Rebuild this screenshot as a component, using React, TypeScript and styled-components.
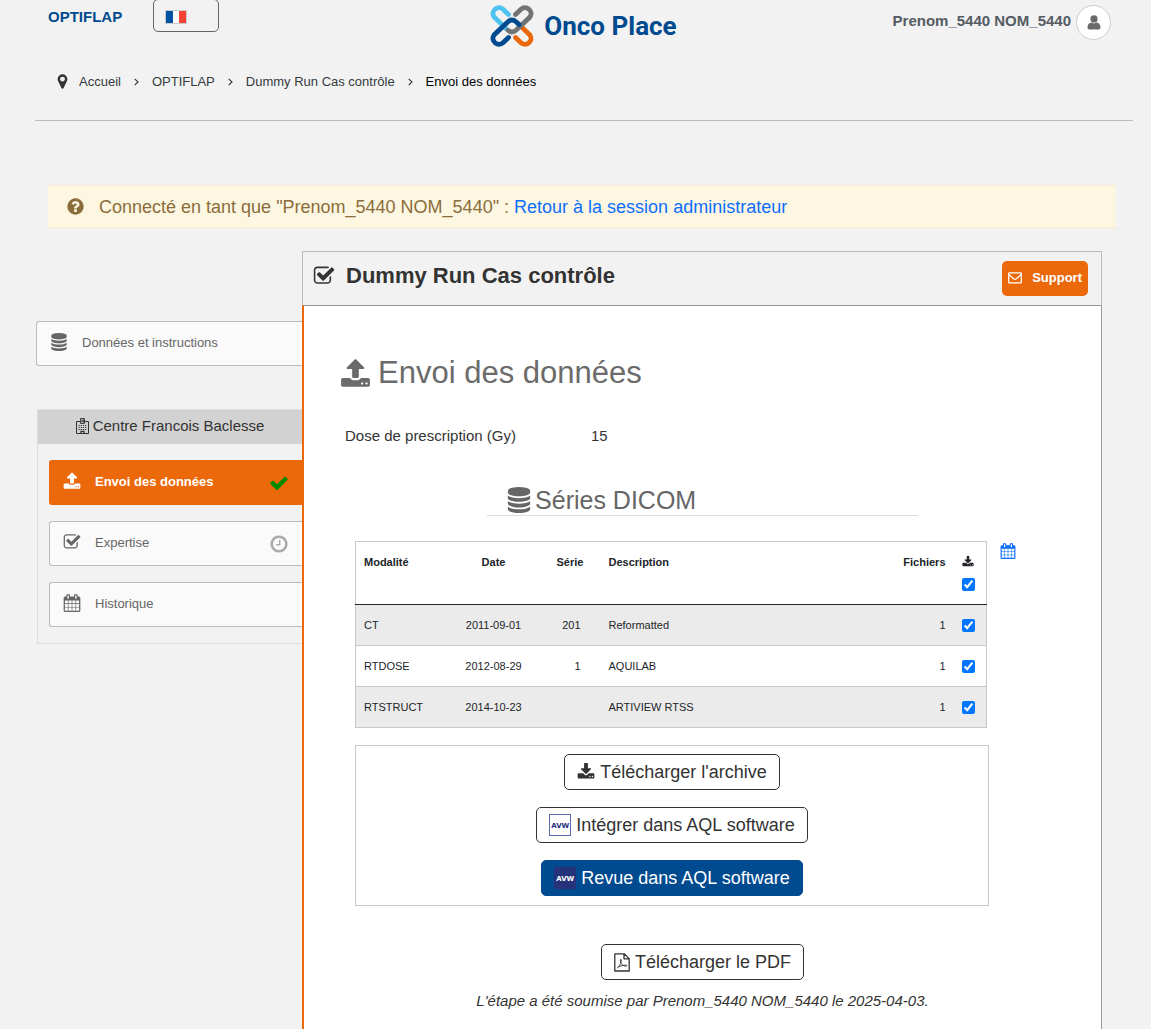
import React, { useState } from "react";
import styled, { createGlobalStyle, css } from "styled-components";

const GlobalStyle = createGlobalStyle`
  *, *::before, *::after { box-sizing: border-box; }
  body {
    margin: 0;
    background: #f2f2f2;
    color: #333;
    font-family: "Liberation Sans", Arial, sans-serif;
    font-size: 15px;
    line-height: 20px;
  }
  button { font-family: inherit; cursor: pointer; }
  a { text-decoration: none; }
`;

/* ---------- icons ---------- */

const GLYPHS = {
  database:
    "M896 768q237 0 443-43t325-127v170q0 69-103 128t-280 93.500-385 34.500-385-34.500-280-93.500-103-128v-170q119 84 325 127t443 43zm0 768q237 0 443-43t325-127v170q0 69-103 128t-280 93.500-385 34.500-385-34.500-280-93.500-103-128v-170q119 84 325 127t443 43zm0-384q237 0 443-43t325-127v170q0 69-103 128t-280 93.500-385 34.500-385-34.500-280-93.500-103-128v-170q119 84 325 127t443 43zm0-1152q208 0 385 34.500t280 93.500 103 128v128q0 69-103 128t-280 93.500-385 34.500-385-34.500-280-93.500-103-128v-128q0-69 103-128t280-93.500 385-34.500z",
  upload:
    "M1344 1472q0-26-19-45t-45-19-45 19-19 45 19 45 45 19 45-19 19-45zm256 0q0-26-19-45t-45-19-45 19-19 45 19 45 45 19 45-19 19-45zm128-224v320q0 40-28 68t-68 28h-1472q-40 0-68-28t-28-68v-320q0-40 28-68t68-28h427q21 56 70.500 92t110.500 36h256q61 0 110.500-36t70.500-92h427q40 0 68 28t28 68zm-325-648q-17 40-59 40h-256v448q0 26-19 45t-45 19h-256q-26 0-45-19t-19-45v-448h-256q-42 0-59-40-17-39 14-69l448-448q18-19 45-19t45 19l448 448q31 30 14 69z",
  download:
    "M1344 1344q0-26-19-45t-45-19-45 19-19 45 19 45 45 19 45-19 19-45zm256 0q0-26-19-45t-45-19-45 19-19 45 19 45 45 19 45-19 19-45zm128-224v320q0 40-28 68t-68 28h-1472q-40 0-68-28t-28-68v-320q0-40 28-68t68-28h465l135 136q58 56 136 56t136-56l136-136h464q40 0 68 28t28 68zm-325-569q17 41-14 70l-448 448q-18 19-45 19t-45-19l-448-448q-31-29-14-70 17-39 59-39h256v-448q0-26 19-45t45-19h256q26 0 45 19t19 45v448h256q42 0 59 39z",
  checkSquare:
    "M1472 930v318q0 119-84.500 203.500t-203.500 84.500h-832q-119 0-203.500-84.500t-84.500-203.500v-832q0-119 84.500-203.500t203.500-84.500h832q63 0 117 25 15 7 18 23 3 17-9 29l-49 49q-10 10-23 10-3 0-9-2-23-6-45-6h-832q-66 0-113 47t-47 113v832q0 66 47 113t113 47h832q66 0 113-47t47-113v-254q0-13 9-22l64-64q10-10 23-10 6 0 12 3 20 8 20 29zm231-489l-814 814q-24 24-57 24t-57-24l-430-430q-24-24-24-57t24-57l110-110q24-24 57-24t57 24l263 263 647-647q24-24 57-24t57 24l110 110q24 24 24 57t-24 57z",
  calendar:
    "M192 1664h288v-288h-288v288zm352 0h320v-288h-320v288zm-352-352h288v-320h-288v320zm352 0h320v-320h-320v320zm-352-384h288v-288h-288v288zm736 736h320v-288h-320v288zm-384-736h320v-288h-320v288zm768 736h288v-288h-288v288zm-384-352h320v-320h-320v320zm-352-864v-288q0-13-9.500-22.500t-22.500-9.500h-64q-13 0-22.500 9.500t-9.500 22.500v288q0 13 9.500 22.500t22.500 9.500h64q13 0 22.500-9.500t9.500-22.500zm736 864h288v-320h-288v320zm-384-384h320v-288h-320v288zm384 0h288v-288h-288v288zm32-480v-288q0-13-9.500-22.500t-22.500-9.500h-64q-13 0-22.500 9.500t-9.500 22.500v288q0 13 9.500 22.500t22.500 9.500h64q13 0 22.500-9.500t9.500-22.500zm384-64v1280q0 52-38 90t-90 38h-1408q-52 0-90-38t-38-90v-1280q0-52 38-90t90-38h128v-96q0-66 47-113t113-47h64q66 0 113 47t47 113v96h384v-96q0-66 47-113t113-47h64q66 0 113 47t47 113v96h128q52 0 90 38t38 90z",
  clock:
    "M1024 544v448q0 14-9 23t-23 9h-320q-14 0-23-9t-9-23v-64q0-14 9-23t23-9h224v-352q0-14 9-23t23-9h64q14 0 23 9t9 23zm416 352q0-148-73-273t-198-198-273-73-273 73-198 198-73 273 73 273 198 198 273 73 273-73 198-198 73-273zm224 0q0 209-103 385.500t-279.500 279.500-385.500 103-385.500-103-279.500-279.500-103-385.500 103-385.500 279.500-279.500 385.500-103 385.500 103 279.500 279.500 103 385.500z",
  check:
    "M1671 566q0 40-28 68l-724 724-136 136q-28 28-68 28t-68-28l-136-136-362-362q-28-28-28-68t28-68l136-136q28-28 68-28t68 28l294 295 656-657q28-28 68-28t68 28l136 136q28 28 28 68z",
  marker:
    "M1152 640q0-106-75-181t-181-75-181 75-75 181 75 181 181 75 181-75 75-181zm256 0q0 109-33 179l-364 774q-16 33-47.500 52t-67.500 19-67.500-19-46.500-52l-365-774q-33-70-33-179 0-212 150-362t362-150 362 150 150 362z",
  question:
    "M1024 1376v-192q0-14-9-23t-23-9h-192q-14 0-23 9t-9 23v192q0 14 9 23t23 9h192q14 0 23-9t9-23zm256-672q0-88-55.500-163t-138.500-116-170-41q-243 0-371 213-15 24 8 42l132 100q7 6 19 6 16 0 25-12 53-68 86-92 34-24 86-24 48 0 85.500 26t37.500 59q0 38-20 61t-68 45q-63 28-115.500 86.500t-52.500 125.500v36q0 14 9 23t23 9h192q14 0 23-9t9-23q0-19 21.500-49.500t54.500-49.500q32-18 49-28.500t46-35 44.500-48 28-60.500 12.500-81zm384 192q0 209-103 385.500t-279.500 279.500-385.500 103-385.500-103-279.500-279.500-103-385.500 103-385.500 279.500-279.500 385.500-103 385.500 103 279.500 279.500 103 385.500z",
};

const Svg = styled.svg`
  display: block;
  flex: none;
`;

function Glyph({ name, size }: { name: keyof typeof GLYPHS; size: number }) {
  return (
    <Svg width={size} height={size} viewBox="0 0 1792 1792" fill="currentColor" aria-hidden="true">
      <path d={GLYPHS[name]} />
    </Svg>
  );
}

function Chevron() {
  return (
    <Svg width="5" height="8" viewBox="0 0 5 8" fill="none" stroke="currentColor" strokeWidth="1.1" aria-hidden="true">
      <path d="M0.7 0.8 4 4 0.7 7.2" />
    </Svg>
  );
}

function EnvelopeIcon() {
  return (
    <Svg width="14" height="12" viewBox="0 0 14 12" fill="none" stroke="currentColor" strokeWidth="1.3" aria-hidden="true">
      <rect x="0.7" y="0.9" width="12.6" height="10" rx="0.6" />
      <path d="M0.8 2.6 5.6 6.700Q7 7.700 8.400 6.700L13.200 2.600" />
    </Svg>
  );
}

function HospitalIcon() {
  return (
    <Svg width="13" height="16" viewBox="0 0 13 16" fill="none" stroke="currentColor" aria-hidden="true">
      <path d="M4.500 3.500h-4v12h12v-12h-4" />
      <path d="M4.500 5.500v-5h4v5zM6 1.500v3M7.500 1.500v3M6 3h1.500" strokeWidth="0.9" />
      <path d="M2.500 7.500h8M2.500 9.500h8M2.500 11.500h8" strokeDasharray="1.200 1" />
      <path d="M5 15.500v-2.200h3v2.200" strokeWidth="1.300" />
    </Svg>
  );
}

function PdfIcon() {
  return (
    <Svg width="16" height="19" viewBox="0 0 16 19" fill="none" stroke="currentColor" strokeWidth="1.300" strokeLinejoin="round" aria-hidden="true">
      <path d="M0.800 0.800h9.400l5 4.800v12.400h-14.400zM10 0.800v5h5" />
      <path
        d="M3 15.300c1.800-1.300 3.600-4.300 4.100-6.500.3-1.500.1-2.600-.3-2.600s-.6 1.100-.1 2.800c.7 2.100 2.100 3.700 4.300 4.100 1 .2 2 0 2-.4s-1.300-.7-3-.5c-2.100.2-4.300 1-5.800 1.900"
        strokeWidth="0.900"
      />
    </Svg>
  );
}

function UserIcon() {
  return (
    <Svg width="14" height="15" viewBox="0 0 14 15" fill="currentColor" aria-hidden="true">
      <circle cx="7" cy="3.900" r="3.600" />
      <path d="M0.500 12.600c0-3 1.600-4.800 3.900-5 1.600 1.100 3.600 1.100 5.200 0 2.300.2 3.900 2 3.900 5 0 1.200-.7 1.900-1.700 1.900H2.200c-1 0-1.700-.7-1.700-1.900z" />
    </Svg>
  );
}

function FlagIcon() {
  return (
    <Svg width="22" height="14" viewBox="0 0 22 14" aria-hidden="true">
      <rect width="22" height="14" fill="#ccc" />
      <rect x="1" y="1" width="7" height="12" fill="#0052a5" />
      <rect x="8" y="1" width="6" height="12" fill="#fff" />
      <rect x="14" y="1" width="7" height="12" fill="#f44336" />
    </Svg>
  );
}

function LogoMark() {
  return (
    <Svg width="44" height="44" viewBox="0 0 44 44" fill="none" strokeWidth="4.800" strokeLinecap="round" aria-hidden="true">
      <path d="M18.500 10.500 13 5.200C8.500 1-.5 6.500 4.300 13.300L16 24.500" stroke="#4fc3f0" />
      <path d="M25.500 33.500 31 38.800c4.500 4.200 13.500-1.300 8.700-8.100L28 19.500" stroke="#ec690b" />
      <path d="M25.500 10.500 31 5.200c4.500-4.200 13.500 1.300 8.700 8.100L26 26.300q-4 3.500-8 0" stroke="#717375" />
      <path d="M18.500 33.500 13 38.800C8.500 43-.5 37.500 4.300 30.700L18 17.700q4-3.500 8 0l3 2.800" stroke="#004a8f" />
    </Svg>
  );
}

/* ---------- header ---------- */

const Page = styled.div`
  min-height: 100vh;
  display: flex;
  flex-direction: column;
`;

const Header = styled.header`
  margin: 0 18px 0 35px;
  height: 121px;
  border-bottom: 1px solid #bbb;
`;

const TopBar = styled.div`
  display: grid;
  grid-template-columns: 1fr auto 1fr;
  height: 52px;
  padding: 0 22px 0 13px;
`;

const TopLeft = styled.div`
  display: flex;
  align-items: flex-start;
  gap: 31px;
`;

const StudyLink = styled.a`
  padding-top: 7px;
  color: #004a8f;
  font-size: 15px;
  font-weight: bold;
`;

const LanguageButton = styled.button`
  width: 66px;
  height: 33px;
  margin-top: -1px;
  padding: 2px 0 0 11px;
  background: transparent;
  border: 1px solid #666;
  border-radius: 5px;
`;

const Brand = styled.a`
  display: flex;
  align-items: center;
  gap: 10px;
  padding-left: 8px;
  color: #004a8f;
  font: 700 26px/32px Roboto, sans-serif;
`;

const Account = styled.div`
  display: flex;
  justify-content: flex-end;
  gap: 5px;
  padding-top: 5px;
  color: #555b62;
  font-weight: bold;
  line-height: 32px;
`;

const Avatar = styled.button`
  display: grid;
  place-items: center;
  width: 35px;
  height: 35px;
  padding: 0;
  color: #6a6a6a;
  background: #fff;
  border: 1px solid #ccc;
  border-radius: 50%;
`;

const Breadcrumb = styled.nav`
  display: flex;
  align-items: center;
  gap: 8px;
  height: 20px;
  margin-top: 19px;
  padding-left: 19px;
  color: #333;
  font-size: 13px;
`;

const Trail = styled.div`
  display: flex;
  align-items: center;
  gap: 13px;
  padding-top: 2px;
`;

const Crumb = styled.a<{ $current?: boolean }>`
  color: ${(p) => (p.$current ? "#000" : "#333a40")};
`;

/* ---------- banner ---------- */

const Banner = styled.div`
  display: flex;
  align-items: center;
  gap: 14px;
  height: 43px;
  margin: 64px 35px 0 48px;
  padding-left: 18px;
  color: #8a6d3b;
  background: #fdf6e1;
  border: solid #faebcc;
  border-width: 1px 0;
  font-size: 18px;
`;

const BannerLink = styled.a`
  color: #0d6efd;
`;

/* ---------- sidebar ---------- */

const Layout = styled.div`
  flex: 1;
  display: flex;
  margin: 23px 49px 0 36px;
`;

const Sidebar = styled.aside`
  flex: none;
  width: 266px;
  padding-top: 70px;
`;

const StepLink = styled.a<{ $active?: boolean }>`
  display: flex;
  align-items: center;
  gap: 14px;
  height: 45px;
  padding: 0 13px;
  color: #666;
  background: #fafafa;
  border: 1px solid #bbb;
  border-right: 0;
  border-radius: 3px 0 0 3px;
  font-size: 13px;
  ${(p) =>
    p.$active &&
    css`
      color: #fff;
      background: #ec690b;
      border-color: #ec690b;
      font-weight: bold;
    `}
`;

const StepIcon = styled.span`
  padding-bottom: 4px;
`;

const StepLabel = styled.span`
  flex: 1;
  padding-bottom: 2px;
`;

const StepStatus = styled.span<{ $done?: boolean }>`
  color: ${(p) => (p.$done ? "#008a00" : "#aaa")};
`;

const Centre = styled.section`
  margin: 43px 0 0 1px;
  border: solid #ddd;
  border-width: 1px 0 1px 1px;
`;

const CentreName = styled.h2`
  display: flex;
  align-items: center;
  justify-content: center;
  gap: 4px;
  height: 34px;
  margin: 0;
  padding-bottom: 2px;
  color: #333;
  background: #d2d2d2;
  font-size: 15px;
  font-weight: normal;
`;

const Steps = styled.div`
  display: flex;
  flex-direction: column;
  gap: 16px;
  padding: 16px 0 16px 11px;
`;

/* ---------- main panel ---------- */

const Panel = styled.main`
  flex: 1;
  min-width: 0;
  display: flex;
  flex-direction: column;
`;

const PanelHeader = styled.div`
  display: flex;
  align-items: center;
  gap: 11px;
  height: 54px;
  padding: 0 13px 0 10px;
  color: #333;
  border: 1px solid #bbb;
  border-bottom: 0;
`;

const PanelTitle = styled.h1`
  flex: 1;
  margin: 0;
  padding-bottom: 5px;
  font-size: 22px;
  line-height: 28px;
`;

const TitleIcon = styled.span`
  padding-bottom: 6px;
`;

const SupportButton = styled.button`
  display: flex;
  align-items: center;
  gap: 10px;
  height: 35px;
  padding: 0 6px 2px;
  color: #fff;
  background: #ec690b;
  border: 0;
  border-radius: 5px;
  font-size: 13px;
  font-weight: bold;
`;

const PanelBody = styled.div`
  flex: 1;
  padding: 47px 51px 16px;
  background: #fff;
  border: solid #999;
  border-width: 1px 1px 0 0;
  border-left: 2px solid #ec690b;
`;

const StepTitle = styled.h2`
  display: flex;
  align-items: center;
  gap: 7px;
  margin: 0 -15px;
  color: #6b6b6b;
  font-size: 31px;
  font-weight: normal;
  line-height: 40px;
`;

const Field = styled.dl`
  display: flex;
  gap: 75px;
  margin: 33px -10px 0;
`;

const FieldPart = styled.div`
  margin: 0;
`;

const SeriesTitle = styled.h3`
  display: flex;
  align-items: center;
  gap: 3px;
  width: 62%;
  margin: 39px auto 25px;
  padding: 0 19px;
  color: #666;
  border-bottom: 1px solid #ddd;
  font-size: 25px;
  font-weight: normal;
  line-height: 30px;
`;

const SeriesGrid = styled.div`
  display: grid;
  grid-template-columns: 1fr 50px;
  gap: 17px 11px;
`;

const CalendarLink = styled.a`
  padding-top: 2px;
  color: #0d6efd;
`;

const Table = styled.table`
  width: calc(100% - 2px);
  border: 1px solid #c8c8c8;
  border-collapse: collapse;
  color: #212529;
  font-size: 11px;
  line-height: 16px;
`;

type CellProps = { $align?: "left" | "center" | "right"; $width?: number };

const HeadCell = styled.th<CellProps>`
  width: ${(p) => (p.$width ? `${p.$width}px` : "auto")};
  height: 63px;
  padding: 12px 8px;
  text-align: ${(p) => p.$align || "left"};
  vertical-align: top;
`;

const Row = styled.tr`
  height: 41px;
  border-top: 1px solid #c8c8c8;
  &:nth-child(odd) {
    background: #ebebeb;
  }
  &:first-child {
    border-top-color: #212529;
  }
`;

const Cell = styled.td<CellProps>`
  padding: 0 8px;
  text-align: ${(p) => p.$align || "left"};
`;

const SerieCell = styled(Cell)`
  padding-right: 20px;
  text-align: right;
`;

const Tick = styled.input`
  display: block;
  width: 13px;
  height: 13px;
  margin: 0;
`;

const SelectAll = styled.div`
  display: grid;
  gap: 10px;
  padding-top: 2px;
`;

const Actions = styled.div`
  grid-column: 1;
  display: flex;
  flex-direction: column;
  align-items: center;
  gap: 17px;
  padding: 8px 8px 9px;
  border: 1px solid #c8c8c8;
`;

const ActionButton = styled.button<{ $primary?: boolean }>`
  display: flex;
  align-items: center;
  gap: 5px;
  height: 36px;
  padding: 0 12px;
  color: ${(p) => (p.$primary ? "#fff" : "#333")};
  background: ${(p) => (p.$primary ? "#004a8f" : "#fff")};
  border: 1px solid ${(p) => (p.$primary ? "#004a8f" : "#333")};
  border-radius: 5px;
  font-size: 18px;
  line-height: 24px;
`;

const AvwBadge = styled.span<{ $primary?: boolean }>`
  display: grid;
  place-items: center;
  width: 22px;
  height: 22px;
  padding-top: 1px;
  color: ${(p) => (p.$primary ? "#fff" : "#26327a")};
  background: ${(p) => (p.$primary ? "#26327a" : "#fff")};
  border: 1px solid ${(p) => (p.$primary ? "#26327a" : "#5a6aa8")};
  font: bold 7px/10px "DejaVu Sans", sans-serif;
`;

const Submission = styled.div`
  display: flex;
  flex-direction: column;
  align-items: center;
  gap: 11px;
  margin-top: 38px;
`;

const SubmissionNote = styled.p`
  margin: 0;
  font-style: italic;
`;

const SERIES = [
  { modality: "CT", date: "2011-09-01", serie: "201", description: "Reformatted", files: 1 },
  { modality: "RTDOSE", date: "2012-08-29", serie: "1", description: "AQUILAB", files: 1 },
  { modality: "RTSTRUCT", date: "2014-10-23", serie: "", description: "ARTIVIEW RTSS", files: 1 },
];

export default function App() {
  const [selected, setSelected] = useState(SERIES.map(() => true));
  const toggle = (index: number) => setSelected(selected.map((v, i) => (i === index ? !v : v)));

  return (
    <Page>
      <GlobalStyle />
      <Header>
        <TopBar>
          <TopLeft>
            <StudyLink href="#">OPTIFLAP</StudyLink>
            <LanguageButton type="button" aria-label="Français">
              <FlagIcon />
            </LanguageButton>
          </TopLeft>
          <Brand href="#">
            <LogoMark />
            Onco Place
          </Brand>
          <Account>
            Prenom_5440 NOM_5440
            <Avatar type="button" aria-label="Mon compte">
              <UserIcon />
            </Avatar>
          </Account>
        </TopBar>
        <Breadcrumb aria-label="Fil d'Ariane">
          <Glyph name="marker" size={17} />
          <Trail>
            <Crumb href="#">Accueil</Crumb>
            <Chevron />
            <Crumb href="#">OPTIFLAP</Crumb>
            <Chevron />
            <Crumb href="#">Dummy Run Cas contrôle</Crumb>
            <Chevron />
            <Crumb href="#" $current aria-current="page">
              Envoi des données
            </Crumb>
          </Trail>
        </Breadcrumb>
      </Header>

      <Banner>
        <Glyph name="question" size={19} />
        <span>
          Connecté en tant que "Prenom_5440 NOM_5440" : <BannerLink href="#">Retour à la session administrateur</BannerLink>
        </span>
      </Banner>

      <Layout>
        <Sidebar>
          <StepLink href="#">
            <StepIcon>
              <Glyph name="database" size={18} />
            </StepIcon>
            <StepLabel>Données et instructions</StepLabel>
          </StepLink>
          <Centre>
            <CentreName>
              <HospitalIcon />
              Centre Francois Baclesse
            </CentreName>
            <Steps>
              <StepLink href="#" $active>
                <StepIcon>
                  <Glyph name="upload" size={18} />
                </StepIcon>
                <StepLabel>Envoi des données</StepLabel>
                <StepStatus $done>
                  <Glyph name="check" size={20} />
                </StepStatus>
              </StepLink>
              <StepLink href="#">
                <StepIcon>
                  <Glyph name="checkSquare" size={18} />
                </StepIcon>
                <StepLabel>Expertise</StepLabel>
                <StepStatus>
                  <Glyph name="clock" size={20} />
                </StepStatus>
              </StepLink>
              <StepLink href="#">
                <StepIcon>
                  <Glyph name="calendar" size={18} />
                </StepIcon>
                <StepLabel>Historique</StepLabel>
              </StepLink>
            </Steps>
          </Centre>
        </Sidebar>

        <Panel>
          <PanelHeader>
            <TitleIcon>
              <Glyph name="checkSquare" size={22} />
            </TitleIcon>
            <PanelTitle>Dummy Run Cas contrôle</PanelTitle>
            <SupportButton type="button">
              <EnvelopeIcon />
              Support
            </SupportButton>
          </PanelHeader>
          <PanelBody>
            <StepTitle>
              <Glyph name="upload" size={31} />
              Envoi des données
            </StepTitle>
            <Field>
              <FieldPart as="dt">Dose de prescription (Gy)</FieldPart>
              <FieldPart as="dd">15</FieldPart>
            </Field>
            <SeriesTitle>
              <Glyph name="database" size={26} />
              Séries DICOM
            </SeriesTitle>
            <SeriesGrid>
              <Table>
                <thead>
                  <tr>
                    <HeadCell $width={92}>Modalité</HeadCell>
                    <HeadCell $width={92} $align="center">Date</HeadCell>
                    <HeadCell $width={61} $align="center">Série</HeadCell>
                    <HeadCell>Description</HeadCell>
                    <HeadCell $width={62} $align="right">Fichiers</HeadCell>
                    <HeadCell $width={33}>
                      <SelectAll>
                        <Glyph name="download" size={12} />
                        <Tick
                          type="checkbox"
                          aria-label="Tout sélectionner"
                          checked={selected.every(Boolean)}
                          onChange={(e) => setSelected(SERIES.map(() => e.target.checked))}
                        />
                      </SelectAll>
                    </HeadCell>
                  </tr>
                </thead>
                <tbody>
                  {SERIES.map((s, i) => (
                    <Row key={s.modality}>
                      <Cell>{s.modality}</Cell>
                      <Cell $align="center">{s.date}</Cell>
                      <SerieCell>{s.serie}</SerieCell>
                      <Cell>{s.description}</Cell>
                      <Cell $align="right">{s.files}</Cell>
                      <Cell>
                        <Tick
                          type="checkbox"
                          aria-label={`Sélectionner ${s.modality}`}
                          checked={selected[i]}
                          onChange={() => toggle(i)}
                        />
                      </Cell>
                    </Row>
                  ))}
                </tbody>
              </Table>
              <CalendarLink href="#" aria-label="Calendrier">
                <Glyph name="calendar" size={16} />
              </CalendarLink>
              <Actions>
                <ActionButton type="button">
                  <Glyph name="download" size={18} />
                  Télécharger l'archive
                </ActionButton>
                <ActionButton type="button">
                  <AvwBadge>AVW</AvwBadge>
                  Intégrer dans AQL software
                </ActionButton>
                <ActionButton type="button" $primary>
                  <AvwBadge $primary>AVW</AvwBadge>
                  Revue dans AQL software
                </ActionButton>
              </Actions>
            </SeriesGrid>
            <Submission>
              <ActionButton type="button">
                <PdfIcon />
                Télécharger le PDF
              </ActionButton>
              <SubmissionNote>L'étape a été soumise par Prenom_5440 NOM_5440 le 2025-04-03.</SubmissionNote>
            </Submission>
          </PanelBody>
        </Panel>
      </Layout>
    </Page>
  );
}
